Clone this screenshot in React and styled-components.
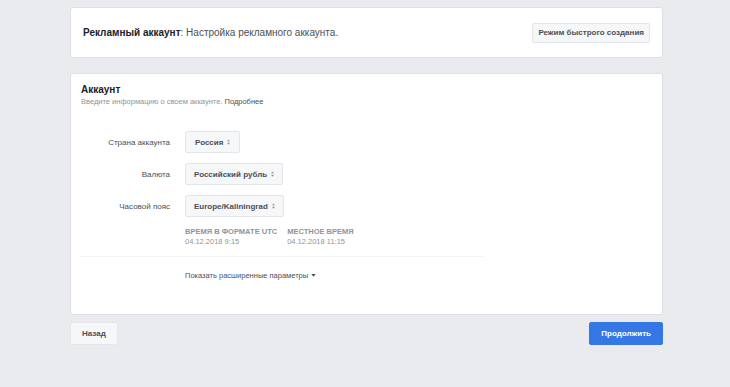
import React from "react";
import styled, { createGlobalStyle } from "styled-components";

const Global = createGlobalStyle`
  html, body { margin: 0; padding: 0; background: #e9ebee; }
  body { font-family: "Liberation Sans", Arial, sans-serif; color: #1d2129; }
`;

const Page = styled.div`
  width: 593px;
  margin-left: 70px;
  padding-top: 7px;
`;

const Card = styled.div`
  background: #fff;
  border: 1px solid #dddfe2;
  border-radius: 3px;
  box-sizing: border-box;
`;

const HeaderCard = styled(Card)`
  height: 51px;
  display: flex;
  align-items: center;
  justify-content: space-between;
  padding: 0 12px 0 12px;
`;

const HeaderTitle = styled.div`
  font-size: 10px;
  color: #4b4f56;
  b { color: #1d2129; font-weight: bold; }
`;

const GreyButton = styled.button`
  font-family: inherit;
  font-weight: bold;
  font-size: ${(p) => p.$fs || 8}px;
  color: #4b4f56;
  background: #f6f7f9;
  border: 1px solid #e4e6ea;
  border-radius: 2px;
  height: ${(p) => p.$h || 20}px;
  padding: 0 ${(p) => p.$px || 8}px;
  display: inline-flex;
  align-items: center;
  gap: 4px;
  cursor: pointer;
`;

const BodyCard = styled(Card)`
  margin-top: 15px;
  height: 242px;
  padding: 10px 10px;
`;

const SectionTitle = styled.div`
  font-size: 10px;
  font-weight: bold;
  color: #1d2129;
`;

const SectionSub = styled.div`
  margin-top: 2px;
  font-size: 7.5px;
  color: #90949c;
  a { color: #4b4f56; text-decoration: none; }
`;

const Form = styled.div`
  margin-top: 25px;
  display: grid;
  grid-template-columns: 89px auto;
  column-gap: 15px;
  row-gap: 10px;
  align-items: center;
  justify-items: start;
`;

const Label = styled.div`
  justify-self: end;
  font-size: 8px;
  color: #4b4f56;
`;

const Times = styled.div`
  grid-column: 2;
  display: flex;
  gap: 10px;
`;

const TimeCol = styled.div`
  display: flex;
  flex-direction: column;
  gap: 1px;
`;

const TimeHead = styled.div`
  font-size: 7.5px;
  font-weight: bold;
  color: #90949c;
`;

const TimeVal = styled.div`
  font-size: 7.5px;
  color: #90949c;
`;

const Divider = styled.div`
  width: 403px;
  height: 1px;
  background: #f2f3f5;
  margin-top: 10px;
`;

const More = styled.div`
  margin: 14px 0 0 104px;
  font-size: 7.5px;
  color: #4b4f56;
  display: flex;
  align-items: center;
  gap: 3px;
`;

const Footer = styled.div`
  margin-top: 7px;
  display: flex;
  justify-content: space-between;
`;

const BlueButton = styled.button`
  font-family: inherit;
  font-weight: bold;
  font-size: 8px;
  color: #fff;
  background: #3578e5;
  border: 1px solid #3578e5;
  border-radius: 2px;
  height: 23px;
  padding: 0 11px;
  cursor: pointer;
`;

const Updown = () => (
  <svg width="3" height="6" viewBox="0 0 4 7">
    <path d="M2 0 L4 2.6 L0 2.6 Z M2 7 L4 4.4 L0 4.4 Z" fill="#90949c" />
  </svg>
);

const Caret = () => (
  <svg width="5" height="3" viewBox="0 0 6 4">
    <path d="M0 0 L6 0 L3 3.5 Z" fill="#4b4f56" />
  </svg>
);

export default function App() {
  return (
    <>
      <Global />
      <Page>
        <HeaderCard>
          <HeaderTitle>
            <b>Рекламный аккаунт</b>: Настройка рекламного аккаунта.
          </HeaderTitle>
          <GreyButton $h={20} $px={5}>Режим быстрого создания</GreyButton>
        </HeaderCard>
        <BodyCard>
          <SectionTitle>Аккаунт</SectionTitle>
          <SectionSub>
            Введите информацию о своем аккаунте. <a href="#">Подробнее</a>
          </SectionSub>
          <Form>
            <Label>Страна аккаунта</Label>
            <GreyButton $h={22} $px={9}>Россия <Updown /></GreyButton>
            <Label>Валюта</Label>
            <GreyButton $h={22} $px={8}>Российский рубль <Updown /></GreyButton>
            <Label>Часовой пояс</Label>
            <GreyButton $h={22} $px={8}>Europe/Kaliningrad <Updown /></GreyButton>
            <Times>
              <TimeCol>
                <TimeHead>ВРЕМЯ В ФОРМАТЕ UTC</TimeHead>
                <TimeVal>04.12.2018 9:15</TimeVal>
              </TimeCol>
              <TimeCol>
                <TimeHead>МЕСТНОЕ ВРЕМЯ</TimeHead>
                <TimeVal>04.12.2018 11:15</TimeVal>
              </TimeCol>
            </Times>
          </Form>
          <Divider />
          <More>Показать расширенные параметры <Caret /></More>
        </BodyCard>
        <Footer>
          <GreyButton $h={23} $px={11}>Назад</GreyButton>
          <BlueButton>Продолжить</BlueButton>
        </Footer>
      </Page>
    </>
  );
}
